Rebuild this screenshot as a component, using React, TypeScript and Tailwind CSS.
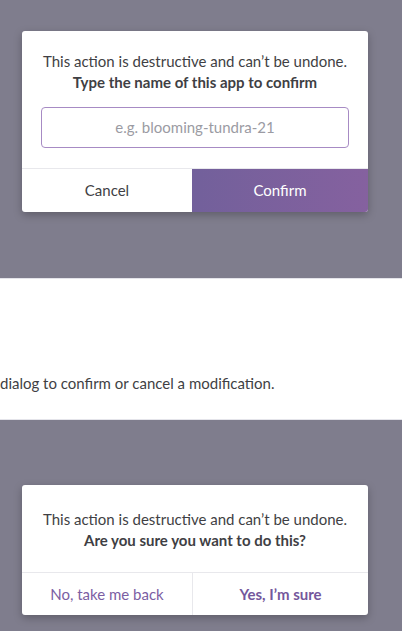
import React from "react";

const font = { fontFamily: "Lato, 'Open Sans', sans-serif" };

export default function App() {
  return (
    <div className="w-[402px] h-[631px] overflow-hidden bg-white text-[#3f3f44]" style={font}>
      <section className="h-[279px] bg-[#7f7d8d] pt-[31px] border-b border-[#e4e4ea]">
        <div className="ml-[22px] w-[346px] bg-white rounded-[3px] shadow-[0_3px_8px_rgba(0,0,0,0.25)] overflow-hidden">
          <div className="pt-[20px] px-[19px] pb-[20px] text-center">
            <p className="text-[15px] leading-[21px]">This action is destructive and can’t be undone.</p>
            <p className="text-[15px] leading-[21px] font-bold">Type the name of this app to confirm</p>
            <div className="mt-[14px] h-[41px] border border-[#a78bc4] rounded-[4px] flex items-center justify-center">
              <span className="text-[15px] text-[#9b9ba3]">e.g. blooming-tundra-21</span>
            </div>
          </div>
          <div className="flex h-[44px] border-t border-[#e8e8ec]">
            <div className="w-[170px] flex items-center justify-center text-[15px] text-[#3f3f44]">Cancel</div>
            <div className="flex-1 flex items-center justify-center text-[15px] text-white bg-gradient-to-r from-[#72609b] to-[#85619f]">
              Confirm
            </div>
          </div>
        </div>
      </section>
      <section className="h-[141px] bg-white flex items-end pb-[25px] border-b border-[#e4e4ea]">
        <p className="text-[15px] leading-[21px] text-[#3f3f44]">dialog to confirm or cancel a modification.</p>
      </section>
      <section className="h-[211px] bg-[#7f7d8d] pt-[65px]">
        <div className="ml-[22px] w-[346px] bg-white rounded-[3px] shadow-[0_3px_8px_rgba(0,0,0,0.25)] overflow-hidden">
          <div className="pt-[24px] pb-[21px] text-center">
            <p className="text-[15px] leading-[21px]">This action is destructive and can’t be undone.</p>
            <p className="text-[15px] leading-[21px] font-bold">Are you sure you want to do this?</p>
          </div>
          <div className="flex h-[43px] border-t border-[#e8e8ec]">
            <div className="w-[171px] flex items-center justify-center text-[15px] text-[#7b5ea3] border-r border-[#e8e8ec]">
              No, take me back
            </div>
            <div className="flex-1 flex items-center justify-center text-[15px] font-bold text-[#74579c]">
              Yes, I’m sure
            </div>
          </div>
        </div>
      </section>
    </div>
  );
}
